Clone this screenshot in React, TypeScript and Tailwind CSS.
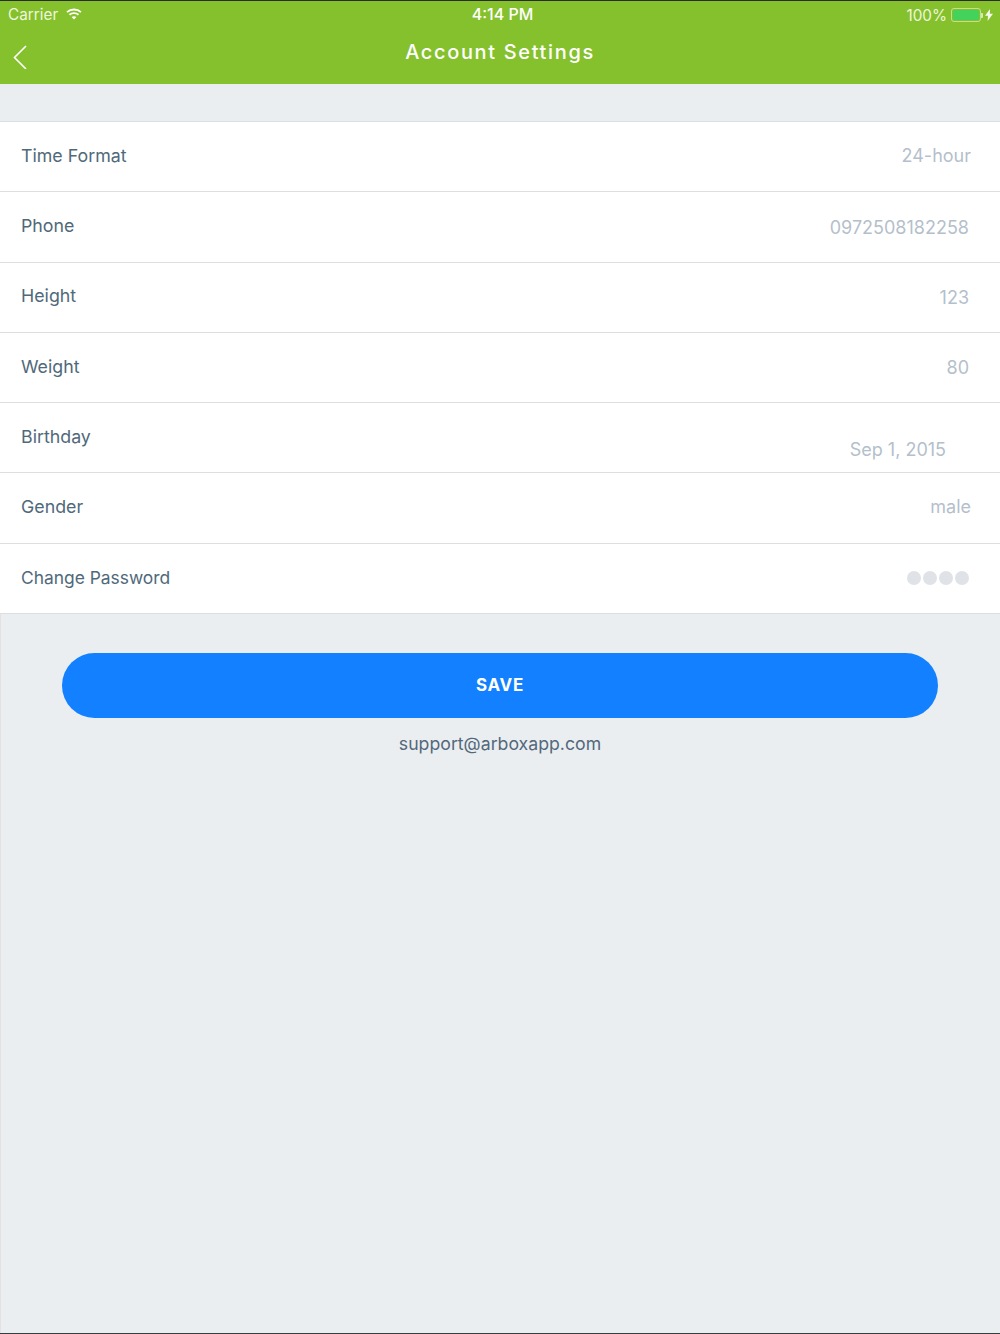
const FONT = "font-['Inter','Liberation_Sans',sans-serif]";

function Wifi() {
  return (
    <svg width="16" height="12" viewBox="0 0 16 12" className="ml-[8px] mt-[-3px]" fill="none" stroke="#fff">
      <path d="M1 4.2C5 .6 11 .6 15 4.2" strokeWidth="1.8" />
      <path d="M3.5 6.7C6 4.6 10 4.6 12.5 6.7" strokeWidth="1.8" />
      <path d="M5.6 8.9c1.4-1 3.4-1 4.8 0L8 11.4z" fill="#fff" stroke="none" />
    </svg>
  );
}

function Battery() {
  return (
    <div className="ml-[4px] flex items-center">
      <div className="h-[14px] w-[30px] rounded-[3px] border border-[#c4e08f] p-[1px]">
        <div className="h-full w-full rounded-[1.5px] bg-[#44d35a]" />
      </div>
      <div className="h-[5px] w-[2px] rounded-r-[1px] bg-[#d5eab0]" />
    </div>
  );
}

function Bolt() {
  return (
    <svg width="8" height="12" viewBox="0 0 8 12" className="ml-[2px]">
      <path d="M5 0 0 6.8h3L2.6 12 8 4.8H4.8z" fill="#f4f9e8" />
    </svg>
  );
}

function Row({
  label,
  value,
  pr,
  pt = 0,
  labelClass = "text-[17.8px] pb-[2px]",
}: {
  label: string;
  value: React.ReactNode;
  pr: string;
  pt?: number;
  labelClass?: string;
}) {
  return (
    <div className="flex h-[70.3px] items-center justify-between border-b-[1.5px] border-[#dcdee0] bg-white pl-[21px]">
      <span className={`${labelClass} leading-[24px] text-[#50697a]`}>{label}</span>
      <span className={`text-[18px] leading-[24px] text-[#b4bfcb] ${pr}`} style={{ paddingTop: pt }}>
        {value}
      </span>
    </div>
  );
}

function Dots() {
  return (
    <span className="flex gap-[2px]">
      <i className="block h-[14px] w-[14px] rounded-full bg-[#dfe2e7]" />
      <i className="block h-[14px] w-[14px] rounded-full bg-[#dfe2e7]" />
      <i className="block h-[14px] w-[14px] rounded-full bg-[#dfe2e7]" />
      <i className="block h-[14px] w-[14px] rounded-full bg-[#dfe2e7]" />
    </span>
  );
}

export default function App() {
  return (
    <div className={`${FONT} flex h-[1334px] w-[1000px] flex-col overflow-hidden border-b border-b-[#3a3b3c] bg-[#eaeef1]`}>
      <header className="h-[84px] shrink-0 border-t border-[#2b2d22] bg-[#85c12c] text-white">
        <div className="grid h-[26px] grid-cols-3 items-center pl-[8px] pr-[7px] text-[15.3px] leading-[26px]">
          <div className="flex items-center text-[#eef6de]">
            Carrier
            <Wifi />
          </div>
          <div className="pb-[2px] pl-[4px] text-center text-[16px] font-medium">4:14 PM</div>
          <div className="flex items-center justify-end text-[#eef6de]">
            <span className="pt-[1px]">100%</span>
            <Battery />
            <Bolt />
          </div>
        </div>
        <div className="flex h-[51px] items-center px-[13px]">
          <svg width="14" height="24" viewBox="0 0 14 24" fill="none" stroke="#fff" strokeWidth="1.6" className="mt-[8px] shrink-0">
            <path d="M13 1 1.5 12.5 13 24" />
          </svg>
          <h1 className="flex-1 pr-[14px] pb-[1px] text-center text-[20px] font-medium leading-[28px] tracking-[1.65px]">
            Account Settings
          </h1>
        </div>
      </header>

      <div className="h-[37px] shrink-0" />

      <section className="border-t-[1.5px] border-[#dcdee0]">
        <Row label="Time Format" value="24-hour" pr="pr-[29px] pb-[2px]" />
        <Row label="Phone" value="0972508182258" pr="pr-[31px]" pt={2} />
        <Row label="Height" value="123" pr="pr-[31px]" pt={2} />
        <Row label="Weight" value="80" pr="pr-[31px]" />
        <Row label="Birthday" value="Sep 1, 2015" pr="pr-[54px]" pt={25} />
        <Row label="Gender" value="male" pr="pr-[29px] pb-[2px]" />
        <Row label="Change Password" labelClass="text-[17.4px]" value={<Dots />} pr="pr-[31px]" />
      </section>

      <div className="flex flex-1 flex-col items-center border-l border-l-[#e4e1e0] pl-[61px] pr-[62px] pt-[39px]">
        <button className="h-[65px] w-full rounded-full bg-[#1280ff] text-[17px] font-bold tracking-[0.7px] text-white">
          SAVE
        </button>
        <p className="mt-[14px] text-[17.7px] leading-[24px] text-[#53687a]">support@arboxapp.com</p>
      </div>
    </div>
  );
}
